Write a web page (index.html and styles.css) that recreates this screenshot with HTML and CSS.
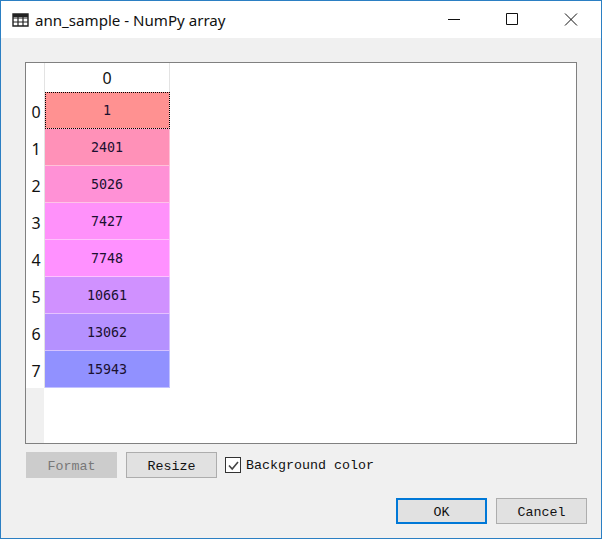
FILE: index.html
```html
<!DOCTYPE html>
<html lang="en">
<head>
  <meta charset="UTF-8">
  <meta name="viewport" content="width=device-width, initial-scale=1.0">
  <title>ann_sample - NumPy array</title>
  <link rel="stylesheet" href="styles.css">
</head>
<body>
  <div class="window">
    <div class="titlebar">
      <svg class="app-icon" width="17" height="14" viewBox="0 0 17 14">
        <path d="M1 1h15v12H1z" fill="none" stroke="#222" stroke-width="1.4"/>
        <path d="M1 5h15 M1 9h15 M6 1v12 M11 1v12" fill="none" stroke="#222" stroke-width="1.2"/>
        <path d="M1 1h15v3H1z" fill="#222"/>
      </svg>
      <span class="title">ann_sample - NumPy array</span>
      <div class="controls">
        <span class="control"><svg width="14" height="14" viewBox="0 0 14 14"><path d="M1 6.5h12" stroke="#111" fill="none"/></svg></span>
        <span class="control"><svg width="14" height="14" viewBox="0 0 14 14"><path d="M1.5 0.5h11v11h-11z" stroke="#111" fill="none"/></svg></span>
        <span class="control"><svg width="14" height="14" viewBox="0 0 14 14"><path d="M1 0.5l12 12M13 0.5L1 12.5" stroke="#111" fill="none"/></svg></span>
      </div>
    </div>

    <div class="content">
      <div class="table-frame">
        <div class="row-headers">
          <div class="corner"></div>
          <div class="row-header">0</div>
          <div class="row-header">1</div>
          <div class="row-header">2</div>
          <div class="row-header">3</div>
          <div class="row-header">4</div>
          <div class="row-header">5</div>
          <div class="row-header">6</div>
          <div class="row-header">7</div>
        </div>
        <div class="column">
          <div class="col-header">0</div>
          <div class="cell current c0">1</div>
          <div class="cell c1">2401</div>
          <div class="cell c2">5026</div>
          <div class="cell c3">7427</div>
          <div class="cell c4">7748</div>
          <div class="cell c5">10661</div>
          <div class="cell c6">13062</div>
          <div class="cell c7">15943</div>
        </div>
      </div>

      <div class="toolbar">
        <button class="btn disabled">Format</button>
        <button class="btn">Resize</button>
        <label class="check">
          <span class="box"><svg width="13" height="13" viewBox="0 0 13 13"><path d="M2 6.5l3.2 3.5L11 3" stroke="#444" stroke-width="1.6" fill="none"/></svg></span>
          Background color
        </label>
      </div>

      <div class="actions">
        <button class="btn default">OK</button>
        <button class="btn">Cancel</button>
      </div>
    </div>
  </div>
</body>
</html>
```

FILE: styles.css
```css
html, body {
  margin: 0;
  height: 100%;
}
body {
  font-family: "Liberation Mono", monospace;
  font-size: 13.33px;
  color: #111;
}
.window {
  width: 602px;
  height: 539px;
  box-sizing: border-box;
  border: 1px solid #2b7fc3;
  background-color: #f0f0f0;
}
.titlebar {
  display: flex;
  align-items: center;
  height: 37px;
  padding-left: 11px;
  background-color: #fff;
}
.app-icon {
  margin-right: 6px;
}
.title {
  font-family: "Noto Sans", sans-serif;
  font-size: 15.1px;
  color: #111;
}
.controls {
  display: flex;
  margin-left: auto;
  padding-right: 1px;
}
.control {
  display: flex;
  justify-content: center;
  width: 58.5px;
}
.content {
  padding: 24px 24px 0 24px;
}
.table-frame {
  display: flex;
  height: 380px;
  border: 1px solid #808080;
  background-color: #fff;
}
.row-headers {
  display: flex;
  flex-direction: column;
  width: 18px;
  background-color: #f0f0f0;
}
.corner {
  height: 29px;
  flex: none;
  background-color: #fff;
}
.row-header {
  height: 35px;
  flex: none;
  padding: 2px 0 0 2px;
  background-color: #fff;
  text-align: center;
  line-height: 37px;
  font-family: "Noto Sans", sans-serif;
  font-size: 16px;
  color: #111;
}
.column {
  width: 125px;
  border-left: 1px solid #e3e3e3;
  align-self: flex-start;
}
.col-header {
  height: 29px;
  line-height: 30px;
  text-align: center;
  border-right: 1px solid #e3e3e3;
  font-family: "Noto Sans", sans-serif;
  font-size: 16px;
  color: #111;
}
.cell {
  height: 36px;
  line-height: 37px;
  text-align: center;
  font-family: "DejaVu Sans Mono", monospace;
  font-size: 13.33px;
  color: #1a1030;
  border-bottom: 1px solid rgba(255, 255, 255, 0.45);
  border-right: 1px solid rgba(255, 255, 255, 0.45);
}
.current {
  outline: 1px dotted #000;
  outline-offset: -1px;
}
.c0 { background-color: #ff9191; }
.c1 { background-color: #ff91b8; }
.c2 { background-color: #ff91d6; }
.c3 { background-color: #ff91fa; }
.c4 { background-color: #ff91ff; }
.c5 { background-color: #d091ff; }
.c6 { background-color: #b591ff; }
.c7 { background-color: #9191ff; }
.toolbar {
  display: flex;
  align-items: center;
  margin-top: 8px;
  padding-left: 1px;
}
.btn {
  width: 91px;
  height: 26px;
  padding: 2px 0 0;
  box-sizing: border-box;
  border: 1px solid #adadad;
  border-radius: 0;
  background-color: #e1e1e1;
  font-family: "Liberation Mono", monospace;
  font-size: 13.33px;
  color: #111;
}
.toolbar .btn {
  margin-right: 9px;
}
.disabled {
  border-color: #ccc;
  background-color: #ccc;
  color: #787878;
}
.default {
  border: 2px solid #0078d7;
}
.check {
  display: flex;
  align-items: center;
  gap: 5px;
  margin-left: -1px;
}
.box {
  display: flex;
  align-items: center;
  justify-content: center;
  width: 14px;
  height: 14px;
  border: 1px solid #333;
  background-color: #fff;
}
.actions {
  display: flex;
  justify-content: flex-end;
  gap: 9px;
  margin-top: 20px;
  margin-right: -10px;
}
```
